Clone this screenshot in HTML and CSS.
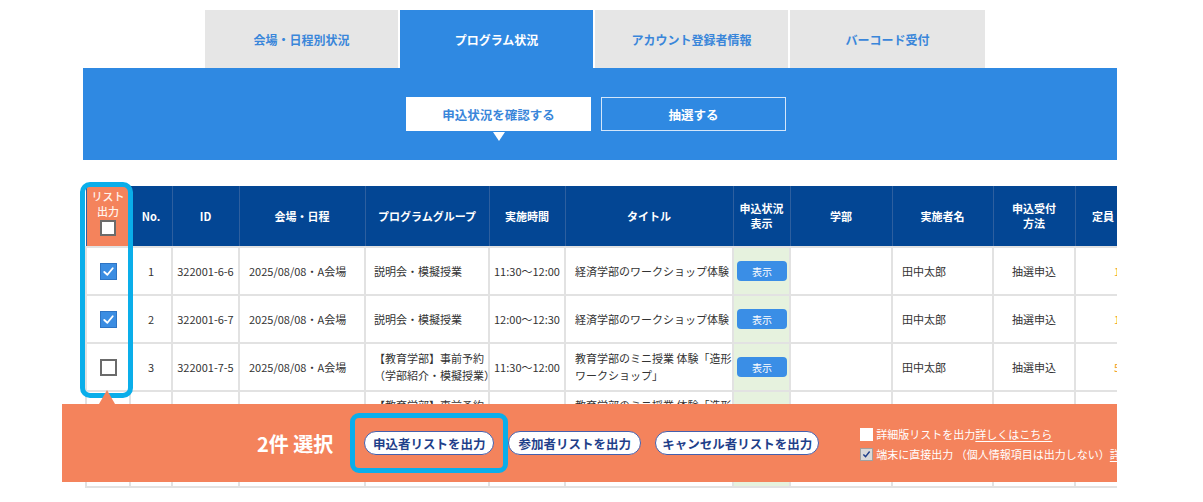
FILE: index.html
```html
<!DOCTYPE html>
<html lang="ja">
<head>
<meta charset="utf-8">
<title>プログラム状況</title>
<link rel="stylesheet" href="styles.css">
</head>
<body>
<div class="page">
  <nav class="tabs">
    <a class="tab">会場・日程別状況</a>
    <a class="tab active">プログラム状況</a>
    <a class="tab">アカウント登録者情報</a>
    <a class="tab">バーコード受付</a>
  </nav>

  <section class="band">
    <div class="subtabs">
      <a class="sub current">申込状況を確認する</a>
      <a class="sub">抽選する</a>
    </div>
  </section>

  <div class="table-wrap">
    <table class="list">
      <colgroup>
        <col class="c-chk"><col class="c-no"><col class="c-id"><col class="c-venue"><col class="c-group"><col class="c-time"><col class="c-title"><col class="c-status"><col class="c-dept"><col class="c-name"><col class="c-method"><col class="c-cap">
      </colgroup>
      <thead>
        <tr>
          <th class="th-out"><span class="th-out-label">リスト<br>出力</span><span class="cb cb-head"></span></th>
          <th>No.</th>
          <th>ID</th>
          <th>会場・日程</th>
          <th>プログラムグループ</th>
          <th>実施時間</th>
          <th>タイトル</th>
          <th>申込状況<br>表示</th>
          <th>学部</th>
          <th>実施者名</th>
          <th>申込受付<br>方法</th>
          <th>定員</th>
        </tr>
      </thead>
      <tbody>
        <tr>
          <td class="center"><span class="cb on"><svg viewBox="0 0 16 16"><polyline points="3.5,8.5 6.8,11.5 12.5,4.5"/></svg></span></td>
          <td class="center">1</td>
          <td class="center">322001-6-6</td>
          <td class="left">2025/08/08・A会場</td>
          <td class="left grp">説明会・模擬授業</td>
          <td class="center">11:30〜12:00</td>
          <td class="left">経済学部のワークショップ体験</td>
          <td class="status"><a class="show">表示</a></td>
          <td></td>
          <td class="left">田中太郎</td>
          <td class="center">抽選申込</td>
          <td class="cap">10</td>
        </tr>
        <tr>
          <td class="center"><span class="cb on"><svg viewBox="0 0 16 16"><polyline points="3.5,8.5 6.8,11.5 12.5,4.5"/></svg></span></td>
          <td class="center">2</td>
          <td class="center">322001-6-7</td>
          <td class="left">2025/08/08・A会場</td>
          <td class="left grp">説明会・模擬授業</td>
          <td class="center">12:00〜12:30</td>
          <td class="left">経済学部のワークショップ体験</td>
          <td class="status"><a class="show">表示</a></td>
          <td></td>
          <td class="left">田中太郎</td>
          <td class="center">抽選申込</td>
          <td class="cap">10</td>
        </tr>
        <tr>
          <td class="center"><span class="cb"></span></td>
          <td class="center">3</td>
          <td class="center">322001-7-5</td>
          <td class="left">2025/08/08・A会場</td>
          <td class="left grp">【教育学部】事前予約<br>（学部紹介・模擬授業）</td>
          <td class="center">11:30〜12:00</td>
          <td class="left">教育学部のミニ授業 体験「造形<br>ワークショップ」</td>
          <td class="status"><a class="show">表示</a></td>
          <td></td>
          <td class="left">田中太郎</td>
          <td class="center">抽選申込</td>
          <td class="cap">5</td>
        </tr>
        <tr>
          <td class="center"><span class="cb"></span></td>
          <td class="center">4</td>
          <td class="center">322001-7-6</td>
          <td class="left">2025/08/08・A会場</td>
          <td class="left grp top">【教育学部】事前予約<br>（学部紹介・模擬授業）</td>
          <td class="center">12:00〜12:30</td>
          <td class="left top">教育学部のミニ授業 体験「造形<br>ワークショップ」</td>
          <td class="status"><a class="show">表示</a></td>
          <td></td>
          <td class="left">田中太郎</td>
          <td class="center">抽選申込</td>
          <td class="cap">5</td>
        </tr>
        <tr>
          <td></td><td></td><td></td><td></td><td></td><td></td><td></td>
          <td class="status"></td>
          <td></td><td></td><td></td><td></td>
        </tr>
      </tbody>
    </table>
  </div>

  <div class="hl hl-col"></div>
  <div class="pointer"></div>

  <div class="actionbar">
    <div class="count">2件 選択</div>
    <div class="actions">
      <a class="pill">申込者リストを出力</a>
      <a class="pill">参加者リストを出力</a>
      <a class="pill">キャンセル者リストを出力</a>
    </div>
    <div class="options">
      <label class="opt"><span class="mini"></span>詳細版リストを出力<u>詳しくはこちら</u></label>
      <label class="opt"><span class="mini on"><svg viewBox="0 0 14 14"><polyline points="3,7.5 5.8,10.3 11,3.8"/></svg></span>端末に直接出力 （個人情報項目は出力しない） <u>詳しくはこちら</u></label>
    </div>
  </div>

  <div class="hl hl-btn"></div>
</div>
</body>
</html>
```

FILE: styles.css
```css
* { box-sizing: border-box; }

html, body {
  margin: 0;
  padding: 0;
  background: #ffffff;
  overflow: hidden;
}

body {
  font-family: "Noto Sans CJK JP", "Noto Sans", sans-serif;
  color: #333333;
}

.page {
  position: relative;
  width: 1034px;
  margin-left: 83px;
  padding-top: 10px;
  height: 502px;
}

/* ---------- top tabs ---------- */
.tabs {
  display: flex;
  gap: 2px;
  margin-left: 122px;
  height: 58px;
}

.tab {
  width: 193px;
  height: 58px;
  display: flex;
  align-items: center;
  justify-content: center;
  background: #e6e6e6;
  color: #3a86da;
  font-size: 12px;
  font-weight: 700;
}

.tab:last-child { width: 195px; }

.tab.active {
  background: #2f89e2;
  color: #ffffff;
}

/* ---------- blue band ---------- */
.band {
  height: 92px;
  background: #2f89e2;
  padding-top: 29px;
}

.subtabs {
  display: flex;
  gap: 10px;
  padding-left: 323px;
}

.sub {
  position: relative;
  width: 185px;
  height: 34px;
  display: flex;
  align-items: center;
  justify-content: center;
  font-size: 12.5px;
  font-weight: 700;
  color: #ffffff;
  border: 1px solid #d4e6fa;
}

.sub.current {
  background: #ffffff;
  color: #3a86da;
  border-color: #ffffff;
}

.sub.current::after {
  content: "";
  position: absolute;
  left: 50%;
  bottom: -11px;
  margin-left: -6px;
  border-left: 6px solid transparent;
  border-right: 6px solid transparent;
  border-top: 9px solid #ffffff;
}

/* ---------- table ---------- */
.table-wrap {
  margin-top: 26px;
  padding-left: 2px;
  overflow: hidden;
  width: 1034px;
}

.list {
  table-layout: fixed;
  border-collapse: collapse;
  width: 1045px;
  font-size: 11px;
}

.c-chk { width: 44px; }
.c-no { width: 42px; }
.c-id { width: 67px; }
.c-venue { width: 126px; }
.c-group { width: 124px; }
.c-time { width: 76px; }
.c-title { width: 168px; }
.c-status { width: 57px; }
.c-dept { width: 102px; }
.c-name { width: 101px; }
.c-method { width: 82px; }
.c-cap { width: 56px; }

.list th {
  height: 61px;
  background: #034694;
  color: #ffffff;
  font-weight: 700;
  font-size: 11px;
  line-height: 15px;
  text-align: center;
  vertical-align: middle;
  border-left: 1px solid #2d5f9f;
  border-right: 1px solid #2d5f9f;
  padding: 0 2px;
  white-space: nowrap;
}

.list th.th-out {
  background: #f4835c;
  color: #fff3ec;
  font-weight: 500;
  line-height: 15px;
  padding-top: 3px;
  vertical-align: top;
}

.th-out-label {
  display: block;
}

.cb {
  display: inline-flex;
  align-items: center;
  justify-content: center;
  width: 17px;
  height: 17px;
  background: #ffffff;
  border: 2px solid #6b6b6b;
  vertical-align: middle;
}

.cb-head {
  margin-top: 0;
  width: 16px;
  height: 16px;
}

.cb.on {
  background: #3b8de2;
  border: 1px solid #2d74c4;
}

.cb svg {
  width: 15px;
  height: 15px;
  fill: none;
  stroke: #ffffff;
  stroke-width: 2;
  stroke-linecap: round;
  stroke-linejoin: round;
}

.list td {
  height: 48px;
  border: 2px solid #e2e2e2;
  line-height: 17px;
  vertical-align: middle;
  color: #333333;
  padding: 0 9px;
  white-space: nowrap;
}

.list td.center {
  text-align: center;
  padding: 0;
}
.list td.left { text-align: left; }
.list td.grp { padding: 0 0 0 8px; }
.list td.top { vertical-align: top; padding-top: 5px; }

.list td.status {
  background: #e6f2de;
  padding: 0 3px;
  text-align: center;
}

.show {
  display: inline-flex;
  align-items: center;
  justify-content: center;
  width: 50px;
  height: 20px;
  border-radius: 4px;
  background: #3a8ee6;
  color: #ffffff;
  font-size: 10px;
}

.list td.cap {
  color: #f0a11c;
  padding: 0 0 0 38px;
  text-align: left;
}

/* ---------- overlays ---------- */
.hl {
  position: absolute;
  border: 5px solid #0aaeea;
  border-radius: 10px;
  z-index: 3;
}

.hl-col {
  left: -3px;
  top: 182px;
  width: 53px;
  height: 216px;
}

.hl-btn {
  left: 267px;
  top: 413px;
  width: 158px;
  height: 60px;
  border-radius: 9px;
}

.pointer {
  position: absolute;
  left: 16px;
  top: 390px;
  width: 0;
  height: 0;
  border-left: 8px solid transparent;
  border-right: 8px solid transparent;
  border-bottom: 14px solid #f4835c;
  z-index: 4;
}

.actionbar {
  position: absolute;
  left: -21px;
  top: 404px;
  width: 1055px;
  height: 78px;
  background: #f4835c;
  display: flex;
  align-items: center;
  padding-left: 195px;
  overflow: hidden;
  white-space: nowrap;
  z-index: 2;
}

.count {
  color: #ffffff;
  font-size: 20px;
  font-weight: 700;
  margin-right: 31px;
  flex: none;
}

.actions {
  display: flex;
  gap: 14px;
  flex: none;
}

.pill {
  height: 24px;
  padding: 0 5px;
  display: flex;
  align-items: center;
  justify-content: center;
  background: #ffffff;
  border: 1px solid #4560ad;
  border-radius: 12px;
  color: #1f3f8a;
  font-size: 12.5px;
  font-weight: 700;
}

.pill:nth-child(1) { width: 130px; }
.pill:nth-child(2) { width: 133px; }
.pill:nth-child(3) { width: 164px; }

.options {
  margin-left: 41px;
  display: flex;
  flex-direction: column;
  gap: 6px;
  padding-top: 2px;
  flex: none;
}

.opt {
  display: flex;
  align-items: center;
  height: 14px;
  line-height: 14px;
  color: #ffffff;
  font-size: 11px;
}

.opt u {
  text-decoration: underline;
  text-underline-offset: 2px;
}

.mini {
  display: inline-flex;
  align-items: center;
  justify-content: center;
  width: 13px;
  height: 13px;
  background: #ffffff;
  margin-right: 3px;
  flex: none;
}

.mini.on {
  background: #d9d9d9;
  border: 1px solid #a0a0a0;
}

.mini svg {
  width: 12px;
  height: 12px;
  fill: none;
  stroke: #1f3f8a;
  stroke-width: 1.8;
}
```
